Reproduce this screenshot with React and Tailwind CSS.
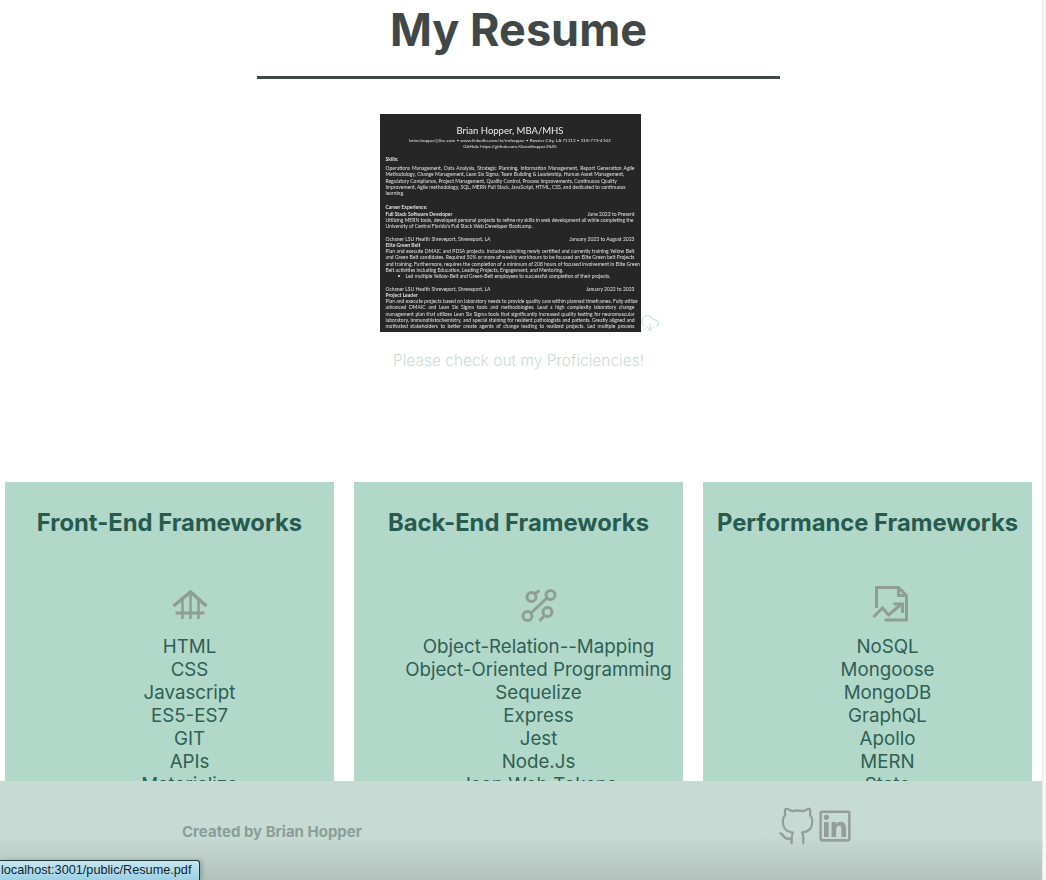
import React from "react";
import { CloudDownload } from "lucide-react";
import { VscGithubAlt } from "react-icons/vsc";
import { AiOutlineLinkedin } from "react-icons/ai";

const HouseIcon = () => (
  <svg width="44" height="40" viewBox="167.5 586 44 40" fill="none" stroke="#8f9c98" strokeWidth="3.5" className="mx-auto block">
    <path d="M173 606 L190 592 L206 606" />
    <path d="M182 599 V619 M190 592 V619 M198 599 V619" strokeWidth="2.5" />
    <path d="M175 613 H204" strokeWidth="3" />
  </svg>
);

const LinksIcon = () => (
  <svg width="44" height="40" viewBox="516.5 586 44 40" fill="none" stroke="#8f9c98" strokeWidth="3" className="mx-auto block">
    <circle cx="550" cy="595" r="4.5" />
    <circle cx="531" cy="597" r="4.5" />
    <circle cx="527" cy="616" r="4.5" />
    <circle cx="547" cy="612" r="4.5" />
    <path d="M534 594 L539 590.5 M530.5 613 L546.5 598 M544 615.5 L539 621" />
  </svg>
);

const FileChartIcon = () => (
  <svg width="44" height="40" viewBox="865.5 586 44 40" fill="none" stroke="#8f9c98" strokeWidth="3" className="mx-auto block">
    <path d="M876 608 V587.5 H898 L906 595.5 V620 H884" />
    <path d="M898 587.5 V595.5 H906" />
    <path d="M873 617 L882 608 L888 615 L900.5 604.5" />
    <path d="M893 604 H902 V613" />
  </svg>
);

const cards = [
  {
    title: "Front-End Frameworks",
    icon: <HouseIcon />,
    items: ["HTML", "CSS", "Javascript", "ES5-ES7", "GIT", "APIs", "Materialize"],
  },
  {
    title: "Back-End Frameworks",
    icon: <LinksIcon />,
    items: ["Object-Relation--Mapping", "Object-Oriented Programming", "Sequelize", "Express", "Jest", "Node.Js", "Json Web Tokens"],
  },
  {
    title: "Performance Frameworks",
    icon: <FileChartIcon />,
    items: ["NoSQL", "Mongoose", "MongoDB", "GraphQL", "Apollo", "MERN", "State"],
  },
];

const Line = ({ children, bold, justify }) => (
  <div className={`whitespace-nowrap ${bold ? "font-bold" : ""} ${justify ? "[text-align-last:justify]" : ""}`}>{children}</div>
);

const Dated = ({ left, right, bold }) => (
  <div className={`flex justify-between whitespace-nowrap ${bold ? "font-bold" : ""}`}>
    <span>{left}</span>
    <span>{right}</span>
  </div>
);

const ResumeImage = () => (
  <div className="w-[261px] h-[218px] overflow-hidden bg-[#262626] text-[#e0e0e0] px-[6px] pt-[11px] text-[5px] leading-[6.25px] font-['Lato',sans-serif] blur-[0.55px]">
    <div className="text-center text-[9.5px] leading-[12px] text-[#eeeeee]">Brian Hopper, MBA/MHS</div>
    <div className="text-center text-[4.6px]">brian.hopper@live.com • www.linkedin.com/in/mrhopper • Bossier City, LA 71112 • 318-773-4103</div>
    <div className="text-center text-[4.6px]">GitHub: https://github.com/Grandhopper2545</div>
    <div className="h-[6.25px]" />
    <Line bold>Skills:</Line>
    <div className="h-[3px]" />
    <Line justify>Operations Management, Data Analysis, Strategic Planning, Information Management, Report Generation Agile</Line>
    <Line>Methodology, Change Management, Lean Six Sigma, Team Building &amp; Leadership, Human Asset Management,</Line>
    <Line>Regulatory Compliance, Project Management, Quality Control, Process Improvements, Continuous Quality</Line>
    <Line>Improvement, Agile methodology, SQL, MERN Full Stack, JavaScript, HTML, CSS, and dedicated to continuous</Line>
    <Line>learning.</Line>
    <div className="h-[8px]" />
    <Line bold>Career Experience:</Line>
    <Dated bold left="Full Stack Software Developer" right={<span className="font-normal">June 2023 to Present</span>} />
    <Line>Utilizing MERN tools, developed personal projects to refine my skills in web development all while completing the</Line>
    <Line>University of Central Florida's Full Stack Web Developer Bootcamp.</Line>
    <div className="h-[6.25px]" />
    <Dated left="Ochsner LSU Health Shreveport, Shreveport, LA" right="January 2023 to August 2023" />
    <Line bold>Elite Green Belt</Line>
    <Line justify>Plan and execute DMAIC and PDSA projects. Includes coaching newly certified and currently training Yellow Belt</Line>
    <Line justify>and Green Belt candidates. Required 50% or more of weekly workhours to be focused on Elite Green belt Projects</Line>
    <Line justify>and training. Furthermore, requires the completion of a minimum of 208 hours of focused involvement in Elite Green</Line>
    <Line>Belt activities including Education, Leading Projects, Engagement, and Mentoring.</Line>
    <div className="pl-[12px] whitespace-nowrap">• &nbsp;&nbsp;&nbsp;Led multiple Yellow-Belt and Green-Belt employees to successful completion of their projects.</div>
    <div className="h-[6.25px]" />
    <Dated left="Ochsner LSU Health Shreveport, Shreveport, LA" right="January 2022 to 2023" />
    <Line bold>Project Leader</Line>
    <Line justify>Plan and execute projects based on laboratory needs to provide quality care within planned timeframes. Fully utilize</Line>
    <Line justify>advanced DMAIC and Lean Six Sigma tools and methodologies. Lead a high complexity laboratory change</Line>
    <Line justify>management plan that utilizes Lean Six Sigma tools that significantly increased quality testing for neuromuscular</Line>
    <Line justify>laboratory, immunohistochemistry, and special staining for resident pathologists and patients. Greatly aligned and</Line>
    <Line justify>motivated stakeholders to better create agents of change leading to realized projects. Led multiple process</Line>
  </div>
);

export default function App() {
  return (
    <div className="relative h-[880px] overflow-hidden bg-white font-['Inter',sans-serif]">
      <div className="w-[1037px]">
        <h1 className="text-center text-[45px] leading-[60px] font-bold text-[#404848]">My Resume</h1>
        <div className="mx-auto mt-[16px] h-[3px] w-[523px] bg-[#404848]" />
        <div className="mt-[35px] pl-px flex justify-center items-end">
          <ResumeImage />
          <CloudDownload size={20} strokeWidth={1.2} className="-ml-[1px] -mr-[1px] -mb-[1px] text-[#c5dad2]" />
        </div>
        <p className="mt-[17px] text-center text-[15.5px] leading-[24px] font-light text-[#c7dcd5]">Please check out my Proficiencies!</p>
        <div className="mt-[109px] flex justify-center gap-[20px]">
          {cards.map((card) => (
            <section key={card.title} className="w-[329px] h-[400px] bg-[#b2d8c9] pt-[25px] text-[#285b50]">
              <h2 className="text-center text-[23.8px] leading-[32px] font-bold whitespace-nowrap">{card.title}</h2>
              <ul className="mt-[47px] pl-10 text-center text-[18.72px] leading-[23px] text-[#2f5f55]">
                <li className="h-[49px]">{card.icon}</li>
                {card.items.map((item) => (
                  <li key={item} className="whitespace-nowrap">{item}</li>
                ))}
              </ul>
            </section>
          ))}
        </div>
      </div>

      <footer className="absolute bottom-0 left-0 w-[1042px] h-[99px] flex items-start bg-gradient-to-b from-[#c6dbd4] from-55% to-[#b2c2bc]">
        <p className="ml-[182px] mt-[42px] text-[15px] leading-[18px] font-bold text-[#8a9e98]">Created by Brian Hopper</p>
        <div className="ml-[414px] mt-[25px] flex items-center text-[#949d9a]">
          <VscGithubAlt className="h-[40px] w-[40px]" />
          <AiOutlineLinkedin className="h-[40px] w-[40px] -ml-[1px]" />
        </div>
      </footer>

      <div className="absolute inset-y-0 right-0 w-[4px] border-l border-[#e6e6e6] bg-[#f8f8f8]" />

      <div className="absolute bottom-0 left-0 h-[20px] w-[200px] rounded-tr-[3px] border-t border-r border-[#26343a] bg-gradient-to-b from-[#c4e5f2] to-[#9dd1e5] pl-[1px] text-[12.7px] leading-[19px] whitespace-nowrap text-[#14252c] font-['Liberation_Sans',sans-serif] shadow-[2px_0_4px_rgba(0,0,0,0.2)]">
        localhost:3001/public/Resume.pdf
      </div>
    </div>
  );
}
